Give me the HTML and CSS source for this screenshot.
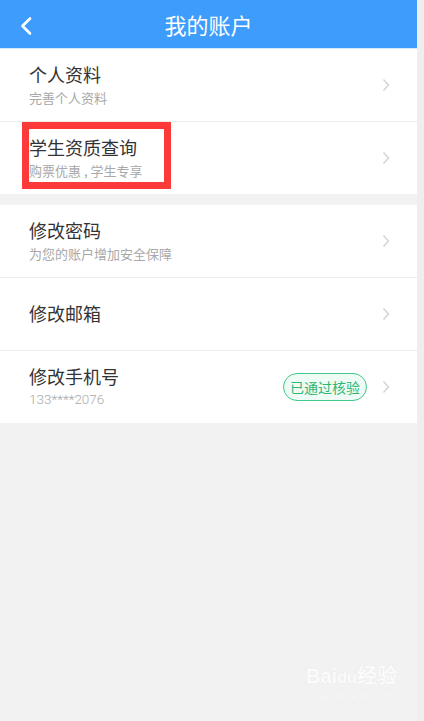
FILE: index.html
```html
<!DOCTYPE html>
<html lang="zh-CN">
<head>
  <meta charset="UTF-8">
  <meta name="viewport" content="width=device-width, initial-scale=1.0">
  <title>我的账户</title>
  <link rel="stylesheet" href="styles.css">
</head>
<body>
  <div class="page">
    <div class="header">
      <svg class="back" width="14" height="18" viewBox="0 0 14 18">
        <path d="M11 1.5 L3.5 9 L11 16.5" fill="none" stroke="#fff" stroke-width="2.6" stroke-linecap="round" stroke-linejoin="round"/>
      </svg>
      <h1>我的账户</h1>
    </div>

    <div class="group">
      <div class="row">
        <div class="text">
          <span class="title">个人资料</span>
          <span class="sub">完善个人资料</span>
        </div>
        <svg class="arrow" width="8" height="14" viewBox="0 0 8 14"><path d="M1.5 1.5 L6.5 7 L1.5 12.5" fill="none" stroke="#d2d2d2" stroke-width="1.4"/></svg>
      </div>
      <div class="row highlight">
        <div class="text">
          <span class="title">学生资质查询</span>
          <span class="sub">购票优惠 , 学生专享</span>
        </div>
        <svg class="arrow" width="8" height="14" viewBox="0 0 8 14"><path d="M1.5 1.5 L6.5 7 L1.5 12.5" fill="none" stroke="#d2d2d2" stroke-width="1.4"/></svg>
        <div class="mark"></div>
      </div>
    </div>

    <div class="group">
      <div class="row">
        <div class="text">
          <span class="title">修改密码</span>
          <span class="sub">为您的账户增加安全保障</span>
        </div>
        <svg class="arrow" width="8" height="14" viewBox="0 0 8 14"><path d="M1.5 1.5 L6.5 7 L1.5 12.5" fill="none" stroke="#d2d2d2" stroke-width="1.4"/></svg>
      </div>
      <div class="row">
        <div class="text">
          <span class="title single">修改邮箱</span>
        </div>
        <svg class="arrow" width="8" height="14" viewBox="0 0 8 14"><path d="M1.5 1.5 L6.5 7 L1.5 12.5" fill="none" stroke="#d2d2d2" stroke-width="1.4"/></svg>
      </div>
      <div class="row">
        <div class="text">
          <span class="title">修改手机号</span>
          <span class="sub num">133****2076</span>
        </div>
        <span class="badge">已通过核验</span>
        <svg class="arrow" width="8" height="14" viewBox="0 0 8 14"><path d="M1.5 1.5 L6.5 7 L1.5 12.5" fill="none" stroke="#d2d2d2" stroke-width="1.4"/></svg>
      </div>
    </div>

    <div class="watermark">
      <span class="wm-logo">Bai<b>du</b>经验</span>
      <span class="wm-url">jingyan.baidu.com</span>
    </div>
  </div>
</body>
</html>
```

FILE: styles.css
```css
body {
  margin: 0;
  background: #eeeeee;
  font-family: "Noto Sans CJK SC", "Noto Sans", sans-serif;
}
.page {
  position: relative;
  width: 417px;
  min-height: 721px;
  background: #f2f2f2;
}
.header {
  height: 48px;
  background: #3d9cfc;
  display: flex;
  align-items: center;
  justify-content: center;
  position: relative;
  border-bottom: 1px solid #d6e9fd;
}
.header h1 {
  margin: 0;
  color: #fff;
  font-size: 22px;
  font-weight: normal;
  line-height: 1;
}
.back {
  position: absolute;
  left: 19px;
  top: 17px;
}
.group {
  background: #fff;
  margin-bottom: 11px;
}
.row {
  position: relative;
  height: 72px;
  display: flex;
  align-items: center;
  padding: 0 27px 0 29px;
  border-bottom: 1px solid #ececec;
}
.row:last-child {
  border-bottom: none;
}
.text {
  flex: 1;
  display: flex;
  flex-direction: column;
  gap: 5px;
  margin-top: -3px;
}
.title {
  font-size: 18px;
  color: #333;
  line-height: 22px;
}
.sub {
  font-size: 13px;
  color: #a8a8a8;
  line-height: 15px;
}
.sub.num {
  font-family: "Roboto", "Noto Sans", sans-serif;
  font-size: 13.5px;
  font-weight: 300;
  color: #aaa;
}
.arrow {
  flex: none;
}
.badge {
  height: 26px;
  padding: 0 6px;
  margin-right: 15px;
  border: 1.5px solid #40c98b;
  border-radius: 15px;
  background: #effbf5;
  color: #2db774;
  font-size: 14px;
  line-height: 26px;
}
.mark {
  position: absolute;
  left: 22px;
  top: 0;
  width: 135px;
  height: 53px;
  border: 7px solid #fc3a3a;
}
.watermark {
  position: absolute;
  left: 306px;
  top: 660px;
  display: flex;
  flex-direction: column;
  align-items: center;
  color: #fbfbfb;
  text-shadow: 0 0 1px #e4e4e4;
}
.wm-logo {
  font-family: "Liberation Sans", sans-serif;
  font-size: 20px;
  font-weight: bold;
}
.wm-logo b {
  font-size: 16px;
}
.wm-url {
  font-family: "Liberation Serif", serif;
  font-size: 11px;
}
```
